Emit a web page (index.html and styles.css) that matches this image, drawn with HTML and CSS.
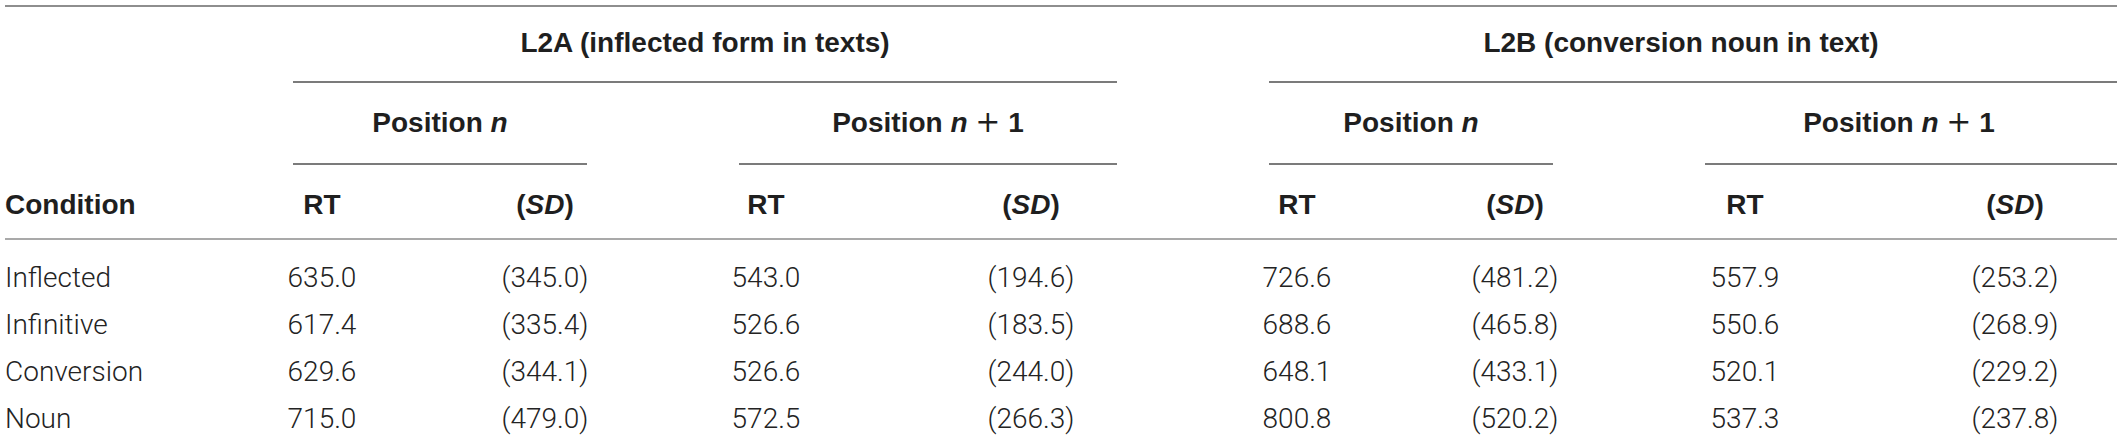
FILE: index.html
```html
<!DOCTYPE html>
<html lang="en">
<head>
<meta charset="utf-8">
<title>Reading times table</title>
<link rel="stylesheet" href="styles.css">
</head>
<body>
<div class="table-wrap">
  <div class="thead grid">
    <div class="group cols-a">
      <div class="label">L2A (inflected form in texts)</div>
      <div class="rule"></div>
    </div>
    <div class="group cols-b last">
      <div class="label">L2B (conversion noun in text)</div>
      <div class="rule"></div>
    </div>

    <div class="sub cols-a1">
      <div class="label">Position <i>n</i></div>
      <div class="rule"></div>
    </div>
    <div class="sub cols-a2">
      <div class="label">Position <i>n</i> <span class="op">+</span> 1</div>
      <div class="rule"></div>
    </div>
    <div class="sub cols-b1">
      <div class="label">Position <i>n</i></div>
      <div class="rule"></div>
    </div>
    <div class="sub cols-b2 last">
      <div class="label">Position <i>n</i> <span class="op">+</span> 1</div>
      <div class="rule"></div>
    </div>

    <div class="colhead first">Condition</div>
    <div class="colhead">RT</div>
    <div class="colhead">(<i>SD</i>)</div>
    <div class="colhead">RT</div>
    <div class="colhead">(<i>SD</i>)</div>
    <div class="colhead">RT</div>
    <div class="colhead">(<i>SD</i>)</div>
    <div class="colhead">RT</div>
    <div class="colhead">(<i>SD</i>)</div>
  </div>

  <div class="tbody grid">
    <div class="cell first">Inflected</div>
    <div class="cell">635.0</div>
    <div class="cell">(345.0)</div>
    <div class="cell">543.0</div>
    <div class="cell">(194.6)</div>
    <div class="cell">726.6</div>
    <div class="cell">(481.2)</div>
    <div class="cell">557.9</div>
    <div class="cell">(253.2)</div>

    <div class="cell first">Infinitive</div>
    <div class="cell">617.4</div>
    <div class="cell">(335.4)</div>
    <div class="cell">526.6</div>
    <div class="cell">(183.5)</div>
    <div class="cell">688.6</div>
    <div class="cell">(465.8)</div>
    <div class="cell">550.6</div>
    <div class="cell">(268.9)</div>

    <div class="cell first">Conversion</div>
    <div class="cell">629.6</div>
    <div class="cell">(344.1)</div>
    <div class="cell">526.6</div>
    <div class="cell">(244.0)</div>
    <div class="cell">648.1</div>
    <div class="cell">(433.1)</div>
    <div class="cell">520.1</div>
    <div class="cell">(229.2)</div>

    <div class="cell first">Noun</div>
    <div class="cell">715.0</div>
    <div class="cell">(479.0)</div>
    <div class="cell">572.5</div>
    <div class="cell">(266.3)</div>
    <div class="cell">800.8</div>
    <div class="cell">(520.2)</div>
    <div class="cell">537.3</div>
    <div class="cell">(237.8)</div>
  </div>
</div>
</body>
</html>
```

FILE: styles.css
```css
:root {
  --cols: 212px 210px 236px 206px 324px 208px 228px 232px 308px;
  --ink: #1f1f1f;
}

html, body {
  margin: 0;
  padding: 0;
  background: #ffffff;
}

.table-wrap {
  box-sizing: border-box;
  width: 2117px;
  height: 438px;
  padding: 5px 0 0 5px;
  overflow: hidden;
}

.grid {
  display: grid;
  grid-template-columns: var(--cols);
}

.thead {
  border-top: 2px solid #8e8e8e;
  font-family: "Liberation Sans", Arial, sans-serif;
  font-weight: 700;
  font-size: 28px;
  line-height: 32px;
  color: var(--ink);
}

.thead .label {
  text-align: center;
  white-space: nowrap;
}

.op {
  font-family: "DejaVu Sans", "Liberation Sans", sans-serif;
  font-weight: 400;
  font-size: 30px;
  line-height: 0;
}

.rule {
  height: 0;
  border-top: 2px solid #7b7b7b;
  margin: 0 76px;
}

.last .rule {
  margin-right: 0;
}

.group {
  padding-top: 20px;
}

.group .rule {
  margin-top: 22px;
}

.cols-a { grid-column: 2 / span 4; }
.cols-b { grid-column: 6 / span 4; }
.cols-a1 { grid-column: 2 / span 2; }
.cols-a2 { grid-column: 4 / span 2; }
.cols-b1 { grid-column: 6 / span 2; }
.cols-b2 { grid-column: 8 / span 2; }

.sub {
  padding-top: 24px;
}

.sub .rule {
  margin-top: 24px;
}

.colhead {
  padding: 24px 0 17px;
  border-bottom: 2px solid #a9a9a9;
  text-align: center;
  white-space: nowrap;
}

.colhead.first,
.cell.first {
  text-align: left;
}

.tbody {
  padding-top: 14px;
  font-family: Roboto, "Liberation Sans", Arial, sans-serif;
  font-weight: 300;
  font-size: 28px;
  line-height: 47px;
  color: #232323;
}

.cell {
  text-align: center;
  white-space: nowrap;
}
```
